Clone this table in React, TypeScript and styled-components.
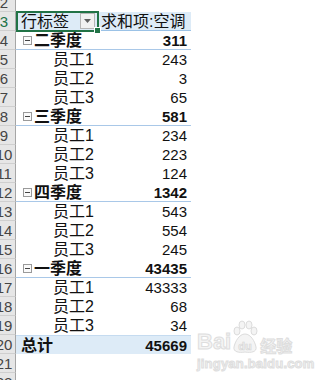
import styled, { createGlobalStyle, css } from 'styled-components';

type Kind = 'blank' | 'header' | 'group' | 'item' | 'total';

interface Group {
  name: string;
  total: number;
  items: number[];
}

const groups: Group[] = [
  { name: '二季度', total: 311, items: [243, 3, 65] },
  { name: '三季度', total: 581, items: [234, 223, 124] },
  { name: '四季度', total: 1342, items: [543, 554, 245] },
  { name: '一季度', total: 43435, items: [43333, 68, 34] },
];

const GlobalStyle = createGlobalStyle`
  html, body {
    margin: 0;
    padding: 0;
    background: #fff;
    overflow: hidden;
  }
  body {
    font-family: "Liberation Sans", "Noto Sans CJK SC", sans-serif;
  }
`;

const Sheet = styled.div`
  position: relative;
  margin-top: -7px;
  width: 315px;
`;

const RowEl = styled.div`
  display: grid;
  grid-template-columns: 16px 82px 93px 1fr;
  height: 19px;
`;

const RowHead = styled.div<{ selected?: boolean }>`
  box-sizing: border-box;
  height: 19px;
  overflow: hidden;
  background: #e6e6e6;
  border-right: 1px solid #a6a6a6;
  border-bottom: 1px solid #cfcfcf;
  font-size: 15px;
  line-height: 19px;
  color: ${(p) => (p.selected ? '#217346' : '#444')};
`;

const RowNum = styled.div`
  width: 30px;
  margin-left: -11px;
  text-align: center;
`;

const cellKind = (kind: Kind) => {
  switch (kind) {
    case 'header':
      return css`
        background: #ddebf7;
        border-bottom: 1px solid #9bc2e6;
      `;
    case 'group':
      return css`
        font-weight: 700;
        border-bottom: 1px solid #a9c8e8;
      `;
    case 'total':
      return css`
        font-weight: 700;
        background: #ddebf7;
        border-top: 1px solid #c5dbf0;
      `;
    default:
      return css``;
  }
};

const LabelCell = styled.div<{ kind: Kind }>`
  position: relative;
  box-sizing: border-box;
  height: 19px;
  display: flex;
  align-items: center;
  font-size: 16px;
  line-height: 19px;
  color: #111;
  white-space: nowrap;
  padding-left: ${(p) => (p.kind === 'item' ? 37 : p.kind === 'group' ? 7 : 5)}px;
  ${(p) => cellKind(p.kind)}
`;

const ValueCell = styled.div<{ kind: Kind }>`
  box-sizing: border-box;
  height: 19px;
  display: flex;
  align-items: center;
  justify-content: flex-end;
  padding-right: 4px;
  font-size: 15px;
  line-height: 19px;
  color: #111;
  white-space: nowrap;
  ${(p) => cellKind(p.kind)}
  ${(p) => p.kind === 'header' && css`justify-content: flex-start; padding-left: 3px; font-size: 16px;`}
`;

const HeaderText = styled.span`
  flex: 1;
`;

const DropButton = styled.div`
  box-sizing: border-box;
  width: 15px;
  height: 16px;
  margin-right: 3px;
  border: 1px solid #b5b5b5;
  background: #f1f1f1;
  display: flex;
  align-items: center;
  justify-content: center;
`;

const Selection = styled.div`
  position: absolute;
  left: 0;
  top: -1px;
  right: -1px;
  bottom: -2px;
  border: 2px solid #217346;
  pointer-events: none;
`;

const Handle = styled.div`
  position: absolute;
  right: -4px;
  bottom: -4px;
  width: 5px;
  height: 5px;
  background: #217346;
  border: 1px solid #fff;
`;

const Toggle = styled.span`
  box-sizing: border-box;
  width: 9px;
  height: 9px;
  margin-right: 2px;
  border: 1px solid #9a9a9a;
  background: #fafafa;
  display: inline-flex;
  align-items: center;
  justify-content: center;
  &::after {
    content: '';
    width: 5px;
    height: 1px;
    background: #444;
  }
`;

const Watermark = styled.div`
  position: absolute;
  left: 197px;
  top: 327px;
  color: #f4f4f4;
  -webkit-text-stroke: 1px #dedede;
  pointer-events: none;
`;

const MarkTop = styled.div`
  display: flex;
  align-items: flex-end;
  font-weight: 700;
`;

const MarkBai = styled.span`
  font-size: 22px;
  line-height: 22px;
  font-family: "Liberation Sans", sans-serif;
  margin-bottom: 1px;
`;

const MarkJing = styled.span`
  font-size: 16px;
  line-height: 18px;
  margin-left: 1px;
  font-family: "Noto Sans CJK SC", sans-serif;
`;

const MarkUrl = styled.div`
  font-size: 13px;
  font-weight: 700;
  line-height: 14px;
  margin-top: 3px;
  letter-spacing: 0.2px;
`;

const Paw = () => (
  <svg width="28" height="34" viewBox="0 0 28 34">
    <g fill="#f4f4f4" stroke="#dcdcdc" strokeWidth="1">
      <ellipse cx="6" cy="11" rx="3" ry="4" />
      <ellipse cx="11" cy="5" rx="3" ry="4" />
      <ellipse cx="18" cy="5" rx="3" ry="4" />
      <ellipse cx="23" cy="11" rx="3" ry="4" />
      <path d="M14 14 C8 14 4 22 3 27 C2 32 8 33 14 32 C20 33 26 32 25 27 C24 22 20 14 14 14 Z" />
    </g>
    <text x="14" y="30" textAnchor="middle" fontSize="11" fontWeight="700" fontFamily="Liberation Sans, sans-serif" fill="#f4f4f4" stroke="#d6d6d6" strokeWidth="0.7">du</text>
  </svg>
);

const DropArrow = () => (
  <svg width="7" height="4" viewBox="0 0 7 4">
    <path d="M0 0 H7 L3.5 4 Z" fill="#606060" />
  </svg>
);

interface Line {
  kind: Kind;
  label?: string;
  value?: string;
}

const buildLines = (): Line[] => {
  const lines: Line[] = [{ kind: 'blank' }, { kind: 'header', label: '行标签', value: '求和项:空调' }];
  groups.forEach((g) => {
    lines.push({ kind: 'group', label: g.name, value: String(g.total) });
    g.items.forEach((v, i) => lines.push({ kind: 'item', label: `员工${i + 1}`, value: String(v) }));
  });
  const sum = groups.reduce((a, g) => a + g.total, 0);
  lines.push({ kind: 'total', label: '总计', value: String(sum) });
  lines.push({ kind: 'blank' });
  lines.push({ kind: 'blank' });
  return lines;
};

export default function App() {
  const lines = buildLines();
  return (
    <>
      <GlobalStyle />
      <Sheet>
        {lines.map((line, i) => {
          const rowNo = i + 2;
          const blank = line.kind === 'blank';
          return (
            <RowEl key={rowNo}>
              <RowHead selected={rowNo === 3}>
                <RowNum>{rowNo}</RowNum>
              </RowHead>
              {blank ? (
                <>
                  <div />
                  <div />
                </>
              ) : (
                <>
                  <LabelCell kind={line.kind}>
                    {line.kind === 'group' && <Toggle />}
                    {line.kind === 'header' ? <HeaderText>{line.label}</HeaderText> : line.label}
                    {line.kind === 'header' && (
                      <>
                        <DropButton>
                          <DropArrow />
                        </DropButton>
                        <Selection>
                          <Handle />
                        </Selection>
                      </>
                    )}
                  </LabelCell>
                  <ValueCell kind={line.kind}>{line.value}</ValueCell>
                </>
              )}
              <div />
            </RowEl>
          );
        })}
        <Watermark>
          <MarkTop>
            <MarkBai>Bai</MarkBai>
            <Paw />
            <MarkJing>经验</MarkJing>
          </MarkTop>
          <MarkUrl>jingyan.baidu.com</MarkUrl>
        </Watermark>
      </Sheet>
    </>
  );
}
